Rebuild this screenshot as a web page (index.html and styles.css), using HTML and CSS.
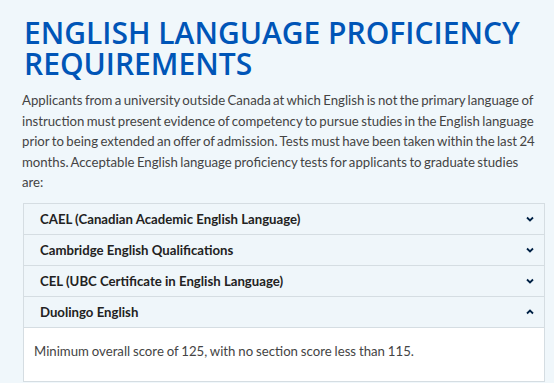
FILE: index.html
```html
<!DOCTYPE html>
<html>
<head>
  <title>English Language Proficiency Requirements</title>
  <link rel="stylesheet" href="styles.css">
</head>
<body>
  <div class="section">
    <h2 class="title">ENGLISH LANGUAGE PROFICIENCY REQUIREMENTS</h2>
    <p class="intro">Applicants from a university outside Canada at which English is not the primary language of instruction must present evidence of competency to pursue studies in the English language prior to being extended an offer of admission. Tests must have been taken within the last 24 months. Acceptable English language proficiency tests for applicants to graduate studies are:</p>

    <div class="accordion">
      <div class="acc-item">
        <div class="acc-head">
          <span>CAEL (Canadian Academic English Language)</span>
          <svg class="chev" width="8" height="6" viewBox="0 0 8 6"><path d="M1 1.5 L4 4.5 L7 1.5" fill="none" stroke="#002145" stroke-width="1.8"/></svg>
        </div>
      </div>
      <div class="acc-item">
        <div class="acc-head">
          <span>Cambridge English Qualifications</span>
          <svg class="chev" width="8" height="6" viewBox="0 0 8 6"><path d="M1 1.5 L4 4.5 L7 1.5" fill="none" stroke="#002145" stroke-width="1.8"/></svg>
        </div>
      </div>
      <div class="acc-item">
        <div class="acc-head">
          <span>CEL (UBC Certificate in English Language)</span>
          <svg class="chev" width="8" height="6" viewBox="0 0 8 6"><path d="M1 1.5 L4 4.5 L7 1.5" fill="none" stroke="#002145" stroke-width="1.8"/></svg>
        </div>
      </div>
      <div class="acc-item open">
        <div class="acc-head">
          <span>Duolingo English</span>
          <svg class="chev" width="8" height="6" viewBox="0 0 8 6"><path d="M1 4.5 L4 1.5 L7 4.5" fill="none" stroke="#002145" stroke-width="1.8"/></svg>
        </div>
        <div class="acc-body">
          <p>Minimum overall score of 125, with no section score less than 115.</p>
        </div>
      </div>
    </div>
  </div>
</body>
</html>
```

FILE: styles.css
```css
body {
  margin: 0;
  background-color: #f0f7fb;
  font-family: Lato, "Open Sans", Arial, sans-serif;
}

.section {
  padding: 17px 9px 0 22px;
}

.title {
  margin: 0 0 11px 2px;
  color: #0055b7;
  font-family: "Open Sans", Arial, sans-serif;
  font-size: 30px;
  line-height: 31px;
  font-weight: 600;
}

.intro {
  max-width: 518px;
  margin: 0 0 10px 0;
  color: #444;
  font-size: 13.2px;
  line-height: 20.5px;
  word-spacing: -1px;
}

.accordion {
  margin-left: 1px;
  border: 1px solid #d5dde2;
  border-bottom: none;
}

.acc-item {
  border-bottom: 1px solid #d5dde2;
}

.acc-head {
  display: flex;
  justify-content: space-between;
  align-items: center;
  height: 30px;
  padding: 0 10px 0 16px;
  background-color: #eff6fa;
  color: #222;
  font-size: 13.2px;
  font-weight: 700;
}

.acc-body {
  background-color: #fff;
  border-top: 1px solid #d5dde2;
  padding: 13px 10px 20px 10px;
}

.acc-body p {
  margin: 0;
  color: #444;
  font-size: 13.2px;
  line-height: 20px;
  word-spacing: -0.5px;
}
```
